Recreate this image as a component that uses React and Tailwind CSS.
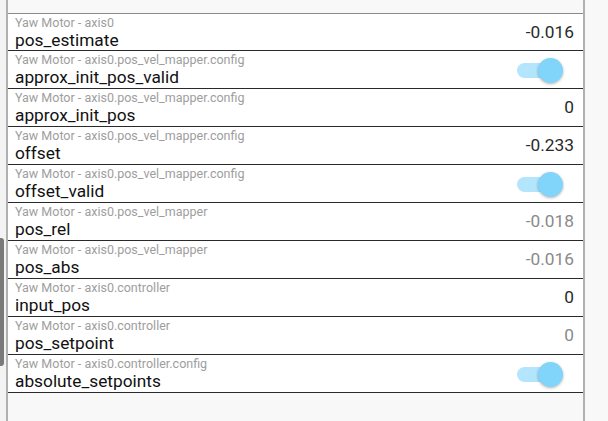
import React from 'react';

const rows = [
  { group: 'Yaw Motor - axis0', name: 'pos_estimate', value: '-0.016' },
  { group: 'Yaw Motor - axis0.pos_vel_mapper.config', name: 'approx_init_pos_valid', toggle: true },
  { group: 'Yaw Motor - axis0.pos_vel_mapper.config', name: 'approx_init_pos', value: '0' },
  { group: 'Yaw Motor - axis0.pos_vel_mapper.config', name: 'offset', value: '-0.233' },
  { group: 'Yaw Motor - axis0.pos_vel_mapper.config', name: 'offset_valid', toggle: true },
  { group: 'Yaw Motor - axis0.pos_vel_mapper', name: 'pos_rel', value: '-0.018', readOnly: true },
  { group: 'Yaw Motor - axis0.pos_vel_mapper', name: 'pos_abs', value: '-0.016', readOnly: true },
  { group: 'Yaw Motor - axis0.controller', name: 'input_pos', value: '0' },
  { group: 'Yaw Motor - axis0.controller', name: 'pos_setpoint', value: '0', readOnly: true },
  { group: 'Yaw Motor - axis0.controller.config', name: 'absolute_setpoints', toggle: true },
];

const Toggle = () => (
  <div className="relative w-[46px] h-[24px] mr-[11px]">
    <div className="absolute left-0 top-[5px] w-[36px] h-[15px] rounded-full bg-[#b3e5fc]" />
    <div className="absolute right-0 top-0 w-[25px] h-[25px] rounded-full bg-[#81d4fa] shadow-[0_1px_3px_rgba(0,0,0,0.3)]" />
  </div>
);

const Row = ({ row, first }) => (
  <div
    className={`flex items-center h-[38px] bg-white border-b border-[#2a2a2a] pl-[7px] pr-[9px] ${
      first ? 'border-t border-t-[#8a8a8a]' : ''
    }`}
  >
    <div className="flex-1 min-w-0 pt-[2px] self-start">
      <div className="text-[12.5px] leading-[14px] text-[#9e9e9e] whitespace-nowrap">{row.group}</div>
      <div className="text-[17.3px] leading-[20px] text-[#111] whitespace-nowrap">{row.name}</div>
    </div>
    {row.toggle ? (
      <Toggle />
    ) : (
      <div className={`text-[17.3px] leading-[21px] ${row.readOnly ? 'text-[#8a8a8a]' : 'text-[#2a2a2a]'}`}>
        {row.value}
      </div>
    )}
  </div>
);

export default function App() {
  return (
    <div className="w-[608px] h-[421px] flex bg-[#f8f8f8] overflow-hidden" style={{ fontFamily: 'Roboto, "Liberation Sans", sans-serif' }}>
      {/* left gutter with scrollbar thumb */}
      <div className="relative w-[6px] bg-[#f3f3f3]">
        <div className="absolute left-0 top-[238px] w-[4px] h-[128px] rounded-r-[3px] bg-[#7a7a7a]" />
      </div>
      {/* property panel */}
      <div className="w-[579px] h-full border-x-2 border-[#b0b0b0] bg-[#f8f8f8] pt-[13px]">
        {rows.map((row, i) => (
          <Row key={row.name} row={row} first={i === 0} />
        ))}
      </div>
      <div className="flex-1 bg-[#f8f8f8]" />
    </div>
  );
}
